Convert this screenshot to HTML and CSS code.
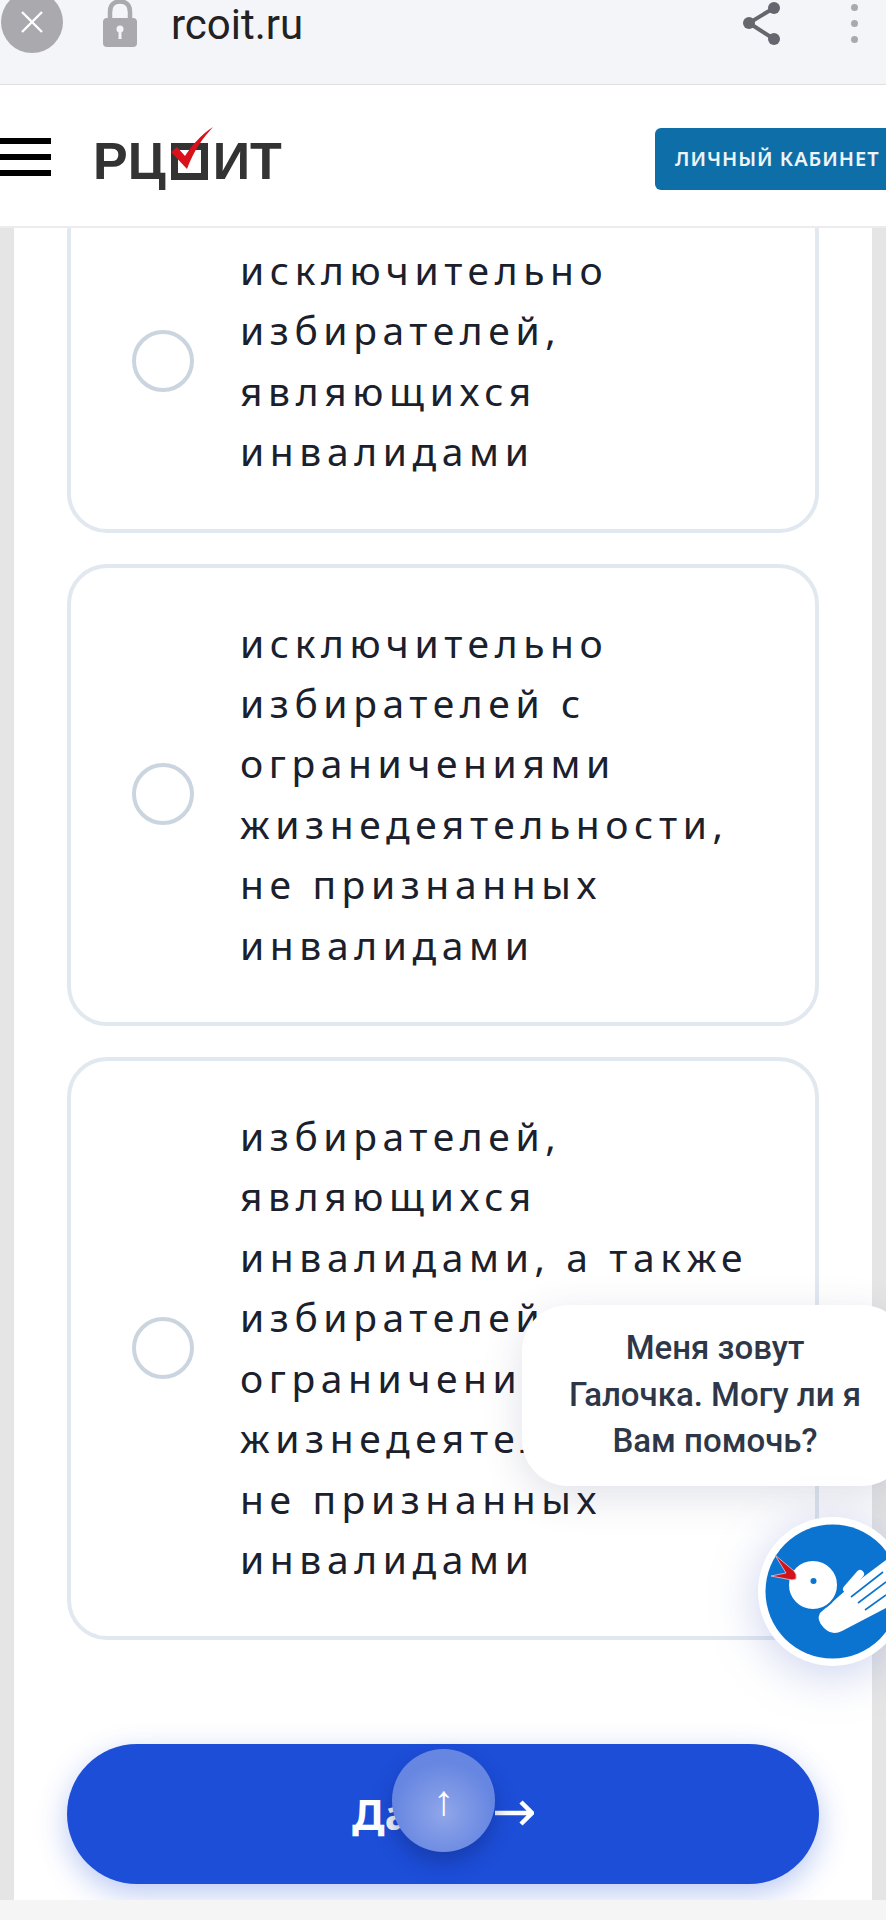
FILE: index.html
```html
<!DOCTYPE html>
<html lang="ru">
<head>
  <meta charset="UTF-8">
  <meta name="viewport" content="width=device-width, initial-scale=1.0">
  <title>РЦОИТ</title>
  <link rel="stylesheet" href="styles.css">
</head>
<body>
  <div class="browser-bar">
    <div class="browser-left">
      <span class="browser-close">
        <svg width="24" height="24" viewBox="0 0 24 24"><path d="M2 2 22 22M22 2 2 22" stroke="#fff" stroke-width="2.4"/></svg>
      </span>
      <svg class="browser-lock" width="36" height="48" viewBox="0 0 36 48">
        <path d="M8 22V12C8 5 12 1.500 18 1.500S28 5 28 12V22" fill="none" stroke="#a9a9ae" stroke-width="4.500"/>
        <rect x="1" y="18" width="34" height="29" rx="4" fill="#a9a9ae"/>
        <circle cx="18" cy="29" r="3.500" fill="#f4f5f8"/>
        <rect x="16.500" y="30" width="3" height="9" fill="#f4f5f8"/>
      </svg>
      <span class="browser-url">rcoit.ru</span>
    </div>
    <div class="browser-right">
      <svg width="40" height="46" viewBox="0 0 40 46">
        <path d="M33 8 8 23 33 39" fill="none" stroke="#66666f" stroke-width="4"/>
        <circle cx="33" cy="8" r="6" fill="#66666f"/>
        <circle cx="8" cy="23" r="6" fill="#66666f"/>
        <circle cx="33" cy="39" r="6" fill="#66666f"/>
      </svg>
      <span class="browser-dots"><i></i><i></i><i></i></span>
    </div>
  </div>

  <header class="site-header">
    <div class="header-left">
      <div class="burger"><i></i><i></i><i></i></div>
      <div class="logo">
        <span>РЦ</span>
        <span class="logo-box"></span>
        <span>ИТ</span>
        <svg class="logo-check" width="44" height="44" viewBox="0 0 44 44">
          <path d="M1 26 7 21 15 30C22 19 31 9 43 1 33 12 24 24 17 43Z" fill="#d8111b"/>
        </svg>
      </div>
    </div>
    <a class="cabinet-button">ЛИЧНЫЙ КАБИНЕТ</a>
  </header>

  <main class="page">
    <div class="panel">
      <label class="answer">
        <input class="answer-radio" type="radio" name="answer">
        <span class="answer-text">исключительно избирателей, являющихся инвалидами</span>
      </label>
      <label class="answer">
        <input class="answer-radio" type="radio" name="answer">
        <span class="answer-text">исключительно избирателей с ограничениями жизнедеятельности, не признанных инвалидами</span>
      </label>
      <label class="answer">
        <input class="answer-radio" type="radio" name="answer">
        <span class="answer-text">избирателей, являющихся инвалидами, а также избирателей с ограничениями жизнедеятельности, не признанных инвалидами</span>
      </label>
      <button class="next-button">
        <span>Далее</span>
        <svg width="39" height="26" viewBox="0 0 39 26">
          <path d="M0 13H36M26 2 37 13 26 24" fill="none" stroke="#fff" stroke-width="4.500"/>
        </svg>
      </button>
    </div>
  </main>

  <div class="chat-bubble">Меня зовут Галочка. Могу ли я Вам помочь?</div>

  <svg class="chat-avatar" width="146" height="180" viewBox="0 0 146 180">
    <circle cx="92.500" cy="91.500" r="74.500" fill="#fff"/>
    <circle cx="92.500" cy="91.500" r="67" fill="#0b74d0"/>
    <path d="M80 113 106 90 146 60V108L102 131Q92 136 84 128 76 120 80 113Z" fill="#fff"/>
    <path d="M107 89 120 74M116 96 146 67" stroke="#fff" stroke-width="8" stroke-linecap="round"/>
    <path d="M111 97 143 72M118 103 146 82M125 110 146 95" stroke="#0b74d0" stroke-width="1.600"/>
    <circle cx="73" cy="85" r="25" fill="#fff" stroke="#0b74d0" stroke-width="2"/>
    <circle cx="73.500" cy="81" r="3" fill="#0b74d0"/>
    <path d="M35 55 54 71Q57 74 56 79L52 80 31 76 46 73Z" fill="#d3131c" stroke="#e8c8d0" stroke-width="0.800"/>
  </svg>

  <button class="up-button">↑</button>
</body>
</html>
```

FILE: styles.css
```css
html {
  overflow: hidden;
}

body {
  font-family: 'Noto Sans', sans-serif;
  background-color: #f5f5f5;
  margin: 0;
  width: 886px;
  height: 1920px;
  overflow: hidden;
  position: relative;
}

.browser-bar {
  height: 84px;
  background-color: #f4f5f8;
  border-bottom: 1px solid #dfdfe1;
  display: flex;
  justify-content: space-between;
  position: relative;
  z-index: 2;
}

.browser-left {
  display: flex;
  align-items: flex-start;
}

.browser-close {
  width: 62px;
  height: 62px;
  margin: -9px 0 0 1px;
  border-radius: 50%;
  background-color: #a9a9ae;
  display: flex;
  align-items: center;
  justify-content: center;
}

.browser-lock {
  margin-left: 39px;
}

.browser-url {
  font-family: 'Roboto', sans-serif;
  font-size: 42px;
  line-height: 50px;
  color: #222;
  margin-left: 33px;
}

.browser-right {
  display: flex;
  align-items: flex-start;
}

.browser-dots {
  display: flex;
  flex-direction: column;
  gap: 9px;
  margin: 4px 28px 0 70px;
}

.browser-dots i {
  width: 7px;
  height: 7px;
  border-radius: 50%;
  background-color: #a9a9ae;
}

.site-header {
  height: 141px;
  background-color: #fff;
  border-bottom: 2px solid #ececee;
  display: flex;
  justify-content: space-between;
  align-items: center;
  position: relative;
  z-index: 2;
}

.header-left {
  align-self: stretch;
  display: flex;
  align-items: center;
}

.burger {
  width: 51px;
  display: flex;
  flex-direction: column;
  gap: 10px;
  margin-top: 3px;
}

.burger i {
  height: 6px;
  background-color: #000;
}

.logo {
  display: flex;
  align-items: center;
  gap: 5px;
  margin: 10px 0 0 42px;
  font-family: 'Liberation Sans', sans-serif;
  font-weight: bold;
  font-size: 52px;
  line-height: 60px;
  color: #333;
  position: relative;
}

.logo-box {
  width: 37px;
  height: 37px;
  box-sizing: border-box;
  border: 7px solid #333;
  margin-top: 1px;
}

.logo-check {
  position: absolute;
  left: 77px;
  top: -5px;
}

.cabinet-button {
  width: 231px;
  height: 62px;
  box-sizing: border-box;
  padding-left: 20px;
  margin-top: 6px;
  background-color: #0d6ea8;
  border-radius: 6px 0 0 6px;
  color: #edf4f8;
  font-size: 20px;
  font-weight: 600;
  letter-spacing: 1px;
  line-height: 62px;
  white-space: nowrap;
}

.page {
  margin-top: -37px;
  height: 1709px;
  padding: 0 14px;
  background-color: #e5e5e5;
  overflow: hidden;
}

.panel {
  height: 100%;
  background-color: #fff;
  padding: 0 53px;
}

.answer {
  display: flex;
  align-items: center;
  box-sizing: border-box;
  margin-bottom: 31px;
  padding: 45px 30px 47px 0;
  border: 4px solid #e2e8f0;
  border-radius: 40px;
}

.answer-radio {
  appearance: none;
  flex: none;
  width: 62px;
  height: 62px;
  margin: 0 46px 0 61px;
  border: 4px solid #cbd5e0;
  border-radius: 50%;
}

.answer-text {
  font-size: 39px;
  line-height: 60.4px;
  letter-spacing: 5.6px;
  color: #1a202c;
}

.next-button {
  display: flex;
  align-items: center;
  justify-content: center;
  gap: 10px;
  width: 100%;
  height: 140px;
  margin-top: 104px;
  padding: 0 0 2px;
  border: none;
  border-radius: 70px;
  background-color: #1d4ed8;
  box-shadow: 0 10px 30px rgba(29, 78, 216, 0.3);
  color: #fff;
  font-family: 'Noto Sans', sans-serif;
  font-size: 42px;
  font-weight: bold;
}

.chat-bubble {
  position: absolute;
  left: 522px;
  top: 1305px;
  width: 386px;
  height: 181px;
  box-sizing: border-box;
  padding: 20px 40px;
  background-color: #fff;
  border-radius: 46px;
  box-shadow: 0 10px 40px rgba(60, 70, 120, 0.16);
  font-family: 'Roboto', sans-serif;
  font-size: 33px;
  font-weight: 500;
  line-height: 46.500px;
  color: #2d3748;
  text-align: center;
}

.chat-avatar {
  position: absolute;
  left: 740px;
  top: 1500px;
  filter: drop-shadow(0 8px 24px rgba(70, 90, 190, 0.28));
}

.up-button {
  position: absolute;
  left: 392px;
  top: 1749px;
  width: 103px;
  height: 103px;
  padding: 0;
  border: none;
  border-radius: 50%;
  background: radial-gradient(circle at 50% 62%, #90a6e9, #6686e1 62%);
  box-shadow: 0 10px 20px rgba(15, 35, 110, 0.4);
  color: #fff;
  font-family: 'Liberation Sans', sans-serif;
  font-size: 42px;
}
```
